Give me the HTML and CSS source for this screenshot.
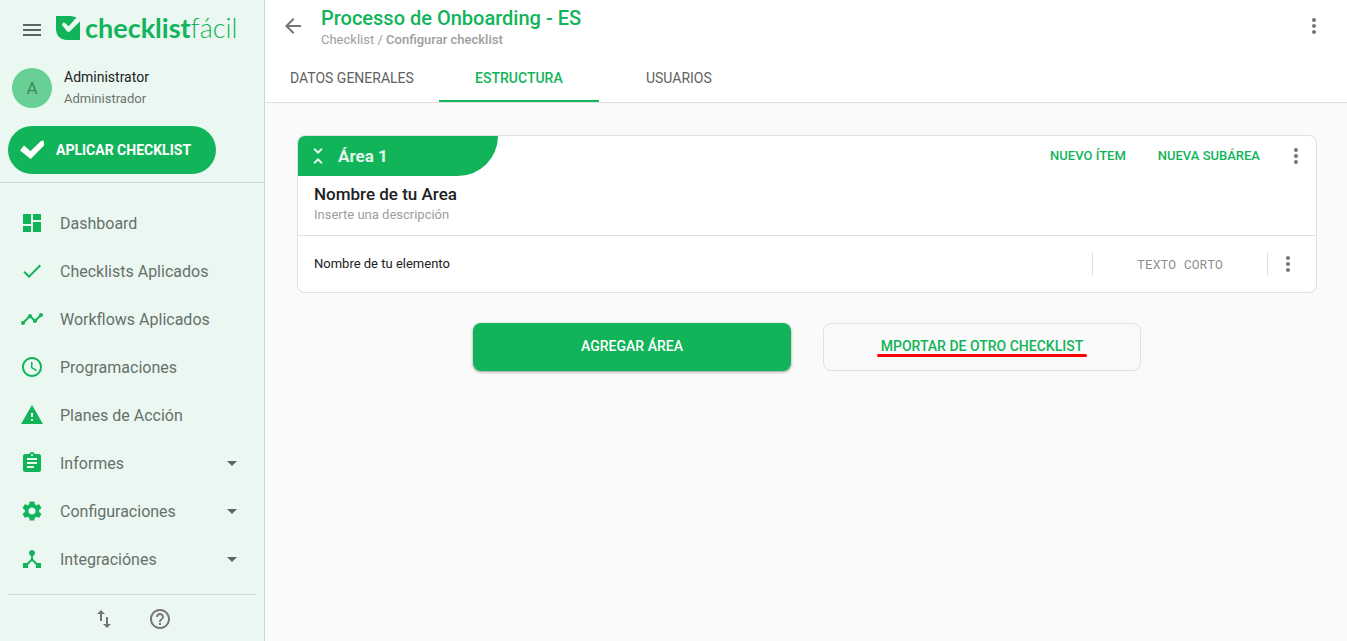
FILE: index.html
```html
<!DOCTYPE html>
<html lang="es">
<head>
<meta charset="utf-8">
<meta name="viewport" content="width=device-width, initial-scale=1">
<title>Processo de Onboarding - ES</title>
<link rel="stylesheet" href="styles.css">
</head>
<body>
<div class="app">
  <aside class="sidebar">
    <div class="brand-row">
      <button class="icon-btn" aria-label="Menú"><svg class="icon" viewBox="0 0 24 24"><path d="M3 18h18v-2H3v2zm0-5h18v-2H3v2zm0-7v2h18V6H3z"/></svg></button>
      <a class="brand" href="#">
        <svg class="brand-mark" viewBox="0 0 24 24"><path fill="#12b45a" d="M0 0H14Q18 .2 20.500 1.500L12.500 10.300 9 7Q7.500 6 6.400 7.400 5.600 8.700 6.600 9.800L11 15.200Q12.500 16.600 14 15.200L24 5.500V24H11Q0 23.500 0 12Z"/></svg>
        <span class="brand-name"><b>checklist</b>fácil</span>
      </a>
    </div>
    <div class="user">
      <span class="avatar">A</span>
      <div class="user-text">
        <span class="user-name">Administrator</span>
        <span class="user-role">Administrador</span>
      </div>
    </div>
    <div class="apply-row">
      <button class="apply"><svg class="icon" viewBox="0 0 24 24"><path d="M0 12.500 4 7.600Q5 8 10.300 13.300L21 3Q24 1.500 24 5V7.600L10.700 21Z"/></svg>APLICAR CHECKLIST</button>
    </div>
    <nav class="nav">
      <a href="#" class="nav-item"><svg class="icon" viewBox="0 0 24 24"><path d="M3 13h8V3H3v10zm0 8h8v-6H3v6zm10 0h8V11h-8v10zm0-18v6h8V3h-8z"/></svg><span>Dashboard</span></a>
      <a href="#" class="nav-item"><svg class="icon" viewBox="0 0 24 24"><path d="M9 16.170 4.830 12l-1.420 1.410L9 19 21 7l-1.410-1.410z"/></svg><span>Checklists Aplicados</span></a>
      <a href="#" class="nav-item"><svg class="icon" viewBox="0 0 24 24"><path d="M23 8c0 1.100-.9 2-2 2-.18 0-.35-.02-.51-.07l-3.560 3.550c.05.16.07.34.07.52 0 1.100-.9 2-2 2s-2-.9-2-2c0-.18.02-.36.07-.52l-2.550-2.550c-.16.05-.34.07-.52.07s-.36-.02-.52-.07l-4.550 4.560c.05.16.07.33.07.51 0 1.100-.9 2-2 2s-2-.9-2-2 .9-2 2-2c.18 0 .35.02.51.07l4.560-4.550C8.020 9.360 8 9.180 8 9c0-1.100.9-2 2-2s2 .9 2 2c0 .18-.02.36-.07.52l2.550 2.550c.16-.05.34-.07.52-.07s.36.02.52.07l3.550-3.560C19.020 8.350 19 8.180 19 8c0-1.100.9-2 2-2s2 .9 2 2z"/></svg><span>Workflows Aplicados</span></a>
      <a href="#" class="nav-item"><svg class="icon" viewBox="0 0 24 24"><path d="M11.990 2C6.470 2 2 6.480 2 12s4.470 10 9.990 10C17.520 22 22 17.520 22 12S17.520 2 11.990 2zM12 20c-4.420 0-8-3.580-8-8s3.580-8 8-8 8 3.580 8 8-3.580 8-8 8zm.5-13H11v6l5.250 3.150.75-1.230-4.500-2.670z"/></svg><span>Programaciones</span></a>
      <a href="#" class="nav-item"><svg class="icon" viewBox="0 0 24 24"><path d="M1 21h22L12 2 1 21zm12-3h-2v-2h2v2zm0-4h-2v-4h2v4z"/></svg><span>Planes de Acción</span></a>
      <a href="#" class="nav-item"><svg class="icon" viewBox="0 0 24 24"><path d="M19 3h-4.180C14.400 1.840 13.300 1 12 1s-2.400.84-2.820 2H5c-1.100 0-2 .9-2 2v14c0 1.100.9 2 2 2h14c1.100 0 2-.9 2-2V5c0-1.100-.9-2-2-2zm-7 0c.55 0 1 .45 1 1s-.45 1-1 1-1-.45-1-1 .45-1 1-1zm2 14H7v-2h7v2zm3-4H7v-2h10v2zm0-4H7V7h10v2z"/></svg><span>Informes</span><svg class="icon caret" viewBox="0 0 24 24"><path d="M7 10l5 5 5-5z"/></svg></a>
      <a href="#" class="nav-item"><svg class="icon" viewBox="0 0 24 24"><path d="M19.140 12.940c.04-.3.06-.61.06-.94 0-.32-.02-.64-.07-.94l2.030-1.580c.18-.14.23-.41.12-.61l-1.920-3.320c-.12-.22-.37-.29-.59-.22l-2.390.96c-.5-.38-1.030-.7-1.620-.94l-.36-2.540c-.04-.24-.24-.41-.48-.41h-3.840c-.24 0-.43.17-.47.41l-.36 2.540c-.59.24-1.130.57-1.620.94l-2.390-.96c-.22-.08-.47 0-.59.22L2.740 8.870c-.12.21-.08.47.12.61l2.030 1.580c-.05.3-.09.63-.09.94s.02.64.07.94l-2.030 1.580c-.18.14-.23.41-.12.61l1.920 3.320c.12.22.37.29.59.22l2.390-.96c.5.38 1.030.7 1.620.94l.36 2.540c.05.24.24.41.48.41h3.840c.24 0 .44-.17.47-.41l.36-2.540c.59-.24 1.130-.56 1.620-.94l2.390.96c.22.08.47 0 .59-.22l1.920-3.320c.12-.22.07-.47-.12-.61l-2.010-1.580zM12 15.600c-1.980 0-3.600-1.620-3.600-3.600s1.620-3.600 3.600-3.600 3.600 1.620 3.600 3.600-1.620 3.600-3.600 3.600z"/></svg><span>Configuraciones</span><svg class="icon caret" viewBox="0 0 24 24"><path d="M7 10l5 5 5-5z"/></svg></a>
      <a href="#" class="nav-item"><svg class="icon" viewBox="0 0 24 24"><path d="M17 16l-4-4V8.820C14.160 8.400 15 7.300 15 6c0-1.660-1.340-3-3-3S9 4.340 9 6c0 1.300.84 2.400 2 2.820V12l-4 4H3v5h5v-3.050l4-4.200 4 4.200V21h5v-5h-4z"/></svg><span>Integraciónes</span><svg class="icon caret" viewBox="0 0 24 24"><path d="M7 10l5 5 5-5z"/></svg></a>
    </nav>
    <div class="side-foot">
      <button class="icon-btn" aria-label="Intercambiar"><svg class="icon" viewBox="0 0 24 24"><path d="M16 17.010V10h-2v7.010h-3L15 21l4-3.990h-3zM9 3 5 6.990h3V14h2V6.990h3L9 3z"/></svg></button>
      <button class="icon-btn" aria-label="Ayuda"><svg class="icon" viewBox="0 0 24 24"><path d="M11 18h2v-2h-2v2zm1-16C6.480 2 2 6.480 2 12s4.480 10 10 10 10-4.480 10-10S17.520 2 12 2zm0 18c-4.410 0-8-3.590-8-8s3.590-8 8-8 8 3.590 8 8-3.590 8-8 8zm0-14c-2.210 0-4 1.790-4 4h2c0-1.100.9-2 2-2s2 .9 2 2c0 2-3 1.750-3 5h2c0-2.250 3-2.500 3-5 0-2.210-1.790-4-4-4z"/></svg></button>
    </div>
  </aside>

  <div class="content">
    <header class="header">
      <div class="title-row">
        <button class="icon-btn" aria-label="Volver"><svg class="icon" viewBox="0 0 24 24"><path d="M20 11H7.830l5.590-5.590L12 4l-8 8 8 8 1.410-1.410L7.830 13H20v-2z"/></svg></button>
        <div class="titles">
          <h1>Processo de Onboarding - ES</h1>
          <p class="crumbs"><a href="#">Checklist</a> / <strong>Configurar checklist</strong></p>
        </div>
        <button class="icon-btn" aria-label="Más opciones"><svg class="icon" viewBox="0 0 24 24"><path d="M12 8c1.100 0 2-.9 2-2s-.9-2-2-2-2 .9-2 2 .9 2 2 2zm0 2c-1.100 0-2 .9-2 2s.9 2 2 2 2-.9 2-2-.9-2-2-2zm0 6c-1.100 0-2 .9-2 2s.9 2 2 2 2-.9 2-2-.9-2-2-2z"/></svg></button>
      </div>
      <nav class="tabs">
        <a href="#" class="tab">DATOS GENERALES</a>
        <a href="#" class="tab active" aria-current="page">ESTRUCTURA</a>
        <a href="#" class="tab">USUARIOS</a>
      </nav>
    </header>
    <main class="main">
      <section class="card">
        <div class="card-head">
          <button class="area-tab"><svg class="icon" viewBox="0 0 24 24"><path d="M7.410 18.590 8.830 20 12 16.830 15.170 20l1.410-1.410L12 14l-4.590 4.590zm9.180-13.180L15.170 4 12 7.170 8.830 4 7.410 5.410 12 10l4.590-4.590z"/></svg>Área 1</button>
          <div class="card-actions">
            <button class="text-btn">NUEVO ÍTEM</button>
            <button class="text-btn">NUEVA SUBÁREA</button>
            <button class="icon-btn" aria-label="Opciones del área"><svg class="icon" viewBox="0 0 24 24"><path d="M12 8c1.100 0 2-.9 2-2s-.9-2-2-2-2 .9-2 2 .9 2 2 2zm0 2c-1.100 0-2 .9-2 2s.9 2 2 2 2-.9 2-2-.9-2-2-2zm0 6c-1.100 0-2 .9-2 2s.9 2 2 2 2-.9 2-2-.9-2-2-2z"/></svg></button>
          </div>
        </div>
        <div class="area-info">
          <h2>Nombre de tu Area</h2>
          <input class="area-desc" type="text" placeholder="Inserte una descripción" aria-label="Descripción del área">
        </div>
        <div class="item">
          <span class="item-name">Nombre de tu elemento</span>
          <span class="item-type">TEXTO CORTO</span>
          <button class="icon-btn" aria-label="Opciones del elemento"><svg class="icon" viewBox="0 0 24 24"><path d="M12 8c1.100 0 2-.9 2-2s-.9-2-2-2-2 .9-2 2 .9 2 2 2zm0 2c-1.100 0-2 .9-2 2s.9 2 2 2 2-.9 2-2-.9-2-2-2zm0 6c-1.100 0-2 .9-2 2s.9 2 2 2 2-.9 2-2-.9-2-2-2z"/></svg></button>
        </div>
      </section>
      <div class="actions">
        <button class="btn primary">AGREGAR ÁREA</button>
        <button class="btn outline"><span class="marked">MPORTAR DE OTRO CHECKLIST</span></button>
      </div>
    </main>
  </div>
</div>
</body>
</html>
```
FILE: styles.css
```css
* { box-sizing: border-box; }
body { margin: 0; font-family: Roboto, "Liberation Sans", sans-serif; color: #212121; background: #fafafa; }
h1, h2, p { margin: 0; }
button, input { font: inherit; border: 0; margin: 0; padding: 0; background: none; }
button { cursor: pointer; }
a { color: inherit; text-decoration: none; }
.icon { width: 24px; height: 24px; flex: none; display: block; fill: currentColor; }
.icon-btn { color: #757575; flex: none; }

.app { display: grid; grid-template-columns: 265px 1fr; min-height: 100vh; }

.sidebar { background: #ebf8f2; border-right: 1px solid #ccd6d1; display: flex; flex-direction: column; }
.brand-row { display: flex; align-items: center; gap: 12px; height: 60px; padding: 0 20px; }
.brand-row .icon-btn { color: #5c6661; }
.brand { display: flex; align-items: center; gap: 5px; padding-bottom: 4px; color: #12b45a; }
.brand-mark { width: 24px; height: 24px; flex: none; }
.brand-name { font-family: Lato, sans-serif; font-size: 27px; line-height: 24px; font-weight: 300; }
.brand-name b { font-weight: 700; }
.user { display: flex; align-items: center; gap: 12px; padding: 8px 12px 18px; }
.avatar { width: 40px; height: 40px; border-radius: 50%; background: #68d095; color: #3f8560; display: grid; place-items: center; font-size: 17px; }
.user-text { display: flex; flex-direction: column; gap: 4px; }
.user-name { font-size: 14px; line-height: 18px; }
.user-role { font-size: 13px; line-height: 18px; color: #6b7570; }
.apply-row { padding: 0 8px 8px; border-bottom: 1px solid #ccd9d2; }
.apply { display: flex; align-items: center; gap: 12px; width: 208px; height: 48px; padding: 0 12px; border-radius: 24px; background: #12b45a; color: #fff; font-size: 14px; font-weight: 700; }
.nav { padding: 16px 20px 11px; }
.nav-item { display: flex; align-items: center; gap: 16px; height: 48px; color: #12b45a; font-size: 16px; }
.nav-item span { flex: 1; color: #66706b; }
.caret { color: #5c6661; }
.side-foot { margin: 0 8px; border-top: 1px solid #ccd9d2; display: flex; justify-content: center; gap: 32px; padding: 12px 0 8px; }

.content { display: flex; flex-direction: column; min-width: 0; }
.header { background: #fff; border-bottom: 1px solid #e0e0e0; }
.title-row { display: flex; align-items: center; gap: 16px; height: 54px; padding: 0 21px 2px 16px; }
.titles { flex: 1; }
h1 { font-size: 20px; line-height: 28px; font-weight: 500; color: #12b45a; }
.crumbs { font-size: 13px; line-height: 16px; color: #9e9e9e; }
.crumbs strong { font-weight: 500; }
.tabs { display: flex; }
.tab { display: grid; place-items: center; min-width: 160px; height: 48px; padding: 0 25px; font-size: 14px; color: #616161; border-top: 2px solid transparent; border-bottom: 2px solid transparent; }
.tab.active { color: #12b45a; font-weight: 500; border-bottom-color: #12b45a; }

.main { padding: 32px 30px 32px 32px; }
.card { background: #fff; border: 1px solid #e0e0e0; border-radius: 8px; overflow: hidden; }
.card-head { display: flex; justify-content: space-between; align-items: center; }
.area-tab { display: flex; align-items: center; gap: 8px; width: 200px; height: 40px; padding: 0 8px; border-bottom-right-radius: 40px; background: #12b45a; color: #e3f6eb; font-size: 17px; font-weight: 700; }
.card-actions { display: flex; align-items: center; gap: 32px; padding-right: 8px; }
.card-actions .icon-btn { margin-left: -8px; }
.text-btn { padding-bottom: 2px; color: #12b45a; font-size: 13px; font-weight: 500; }
.area-info { display: flex; flex-direction: column; padding: 7px 16px 13px; border-bottom: 1px solid #e0e0e0; }
h2 { font-size: 17px; line-height: 23px; font-weight: 500; }
.area-desc { height: 16px; font-size: 13px; }
.area-desc::placeholder { color: #9e9e9e; opacity: 1; }
.item { display: flex; align-items: center; height: 56px; padding: 0 16px; gap: 8px; }
.item-name { flex: 1; padding-bottom: 2px; font-size: 13px; }
.item-type { width: 176px; line-height: 24px; text-align: center; border: solid #e0e0e0; border-width: 0 1px; color: #8c8c8c; font-family: "Roboto Mono", "DejaVu Sans Mono", monospace; font-size: 13px; }
.actions { display: flex; justify-content: center; flex-wrap: wrap; gap: 32px; margin-top: 30px; }
.btn { width: 318px; height: 48px; padding-bottom: 2px; border-radius: 8px; font-size: 14px; font-weight: 500; }
.primary { background: #12b45a; color: #fff; box-shadow: 0 1px 3px rgba(0, 0, 0, .4); }
.outline { border: 1px solid #e0e0e0; color: #12b45a; }
.marked { position: relative; }
.marked::after { content: ""; position: absolute; left: -4px; right: -4px; bottom: -3px; height: 3px; border-radius: 2px; background: #f00; }
```
